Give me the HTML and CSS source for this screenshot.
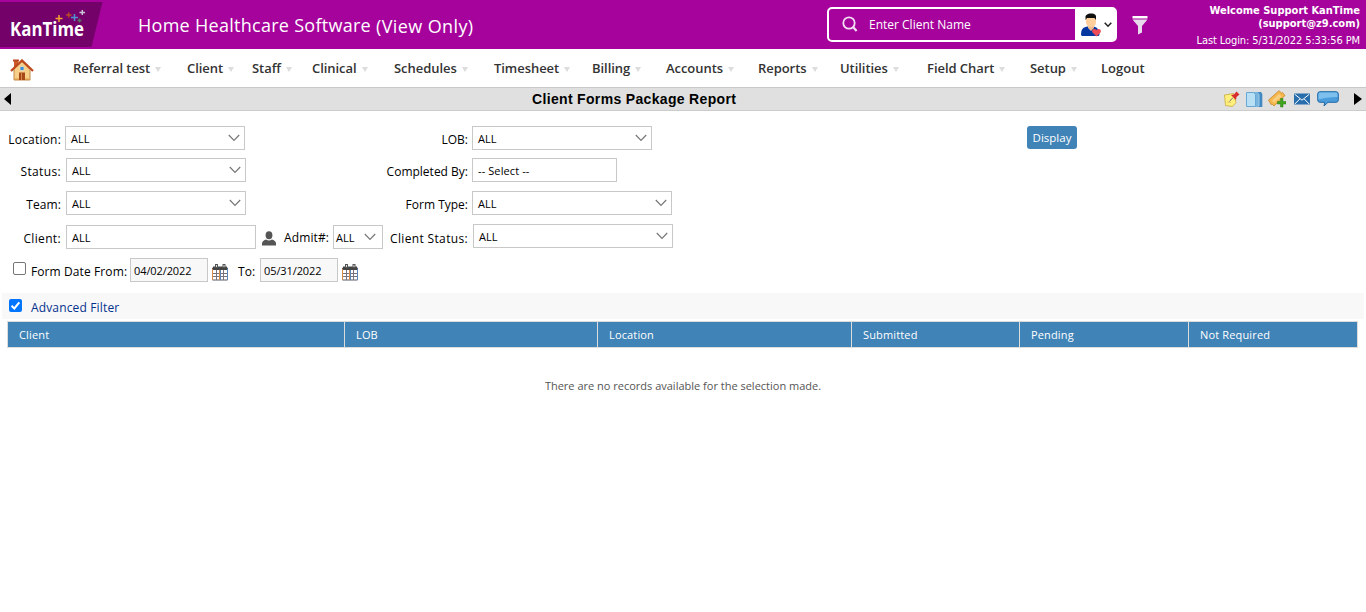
FILE: index.html
```html
<!DOCTYPE html>
<html lang="en">
<head>
<meta charset="utf-8">
<title>Client Forms Package Report</title>
<link rel="stylesheet" href="styles.css">
</head>
<body>
<svg class="defs" width="0" height="0">
  <symbol id="chev" viewBox="0 0 12 8"><path d="M.8 1l5.2 5.4L11.2 1" fill="none" stroke="#777" stroke-width="1.2"/></symbol>
  <symbol id="cal" viewBox="0 0 16 17">
    <path d="M.5 4h15v12H.5z" fill="#fff" stroke="#555b66"/>
    <path d="M1 2.500h14V6H1z" fill="#444"/>
    <path d="M3 0h3v4H3zM10.500 0h3v4h-3z" fill="#555"/><path d="M4 1h1v2H4zM11.500 1h1v2h-1z" fill="#ddd"/>
    <path d="M4.500 6v10M11.500 6v10M1 9.500h14M1 12.500h14" stroke="#77727c" fill="none"/>
    <path d="M.5 5v11M7.500 6v10" stroke="#d98a45"/><path d="M15.500 5v11M8.500 6v10" stroke="#5b87b8"/>
  </symbol>
</svg>
<header class="top">
  <svg class="logo" width="103" height="49" viewBox="0 0 103 49">
    <path d="M0 2h102.500L91.500 47H0z" fill="#740069"/>
    <text class="logo-text" x="10" y="36" textLength="74" lengthAdjust="spacingAndGlyphs">KanTime</text>
    <g fill="none" stroke-width="1.500">
      <path d="M55.500 18.500h7M59 15v7" stroke="#f2a234"/><path d="M66 15h5.500M68.700 12.500v5" stroke="#b84a28"/>
      <path d="M71 17.500h7M74.500 14v7" stroke="#5390d0"/><path d="M79.500 12.500h5.500M82.300 10v5" stroke="#c9c5d6"/>
      <path d="M77.500 20.500h4M79.500 18.500v4" stroke="#55775e"/>
    </g>
  </svg>
  <h1 class="product">Home Healthcare Software <span class="mode">(View Only)</span></h1>
  <div class="search">
    <svg class="glass" width="16" height="17" viewBox="0 0 16 17"><circle cx="7" cy="7" r="5.700" fill="none" stroke="#f3dff3" stroke-width="1.800"/><path d="M11 11l3.600 4" stroke="#f3dff3" stroke-width="2.200"/></svg>
    <span class="search-hint">Enter Client Name</span>
    <div class="who">
      <svg width="20" height="24" viewBox="0 0 20 24">
        <path d="M0 22c0-6 2-8 7-8.500h5c4 .5 6 2.500 6.500 8.500l-1 1H1z" fill="#0437a0"/>
        <path d="M7 12h6v3l-3 3-3-3z" fill="#efb98d"/><path d="M5 4h10v5c0 3-2 5-5 5s-5-2-5-5z" fill="#ffcf9c"/>
        <path d="M4.500 7V3C6 1 8 .5 10 .5S14.500 1 15 3v4l-1.500-2H6z" fill="#101010"/>
        <path d="M15.500 23.500L11.500 19.500c-1.500-3 2-4.500 4-2.500 2-2 5.500-.5 4 2.500z" fill="#ed4b55"/>
      </svg>
      <svg width="8" height="6" viewBox="0 0 8 6"><path d="M.7.8L4 4.200 7.300.8" fill="none" stroke="#222" stroke-width="1.500"/></svg>
    </div>
  </div>
  <svg class="funnel" width="16" height="19" viewBox="0 0 16 19"><path d="M.5 0h15v2.500H.5z" fill="#fff"/><path d="M.5 3.500h15L10 10v6.500L6 18.500V10z" fill="#e8dcec"/></svg>
  <div class="user"><b>Welcome Support KanTime</b><b>(support@z9.com)</b><span class="login">Last Login: 5/31/2022 5:33:56 PM</span></div>
</header>
<nav class="menu">
  <a class="home"><svg width="24" height="22" viewBox="0 0 24 22">
    <path d="M4 1h4v7H4z" fill="#cf5b2c"/><path d="M3 .5h6v2H3z" fill="#b84720"/>
    <path d="M4 10l8-7.500 8 8V21H4z" fill="#f8cf88" stroke="#c18a4a"/><path d="M5 19.500h14V21H5z" fill="#dd9c49"/>
    <path d="M1 12L12 1.500 23 12" fill="none" stroke="#bd491d" stroke-width="2.300"/>
    <path d="M9 13.500h6V21H9z" fill="#a64817"/><path d="M11.500 14v7" stroke="#d88949"/><path d="M10 7.500h4v4h-4z" fill="#398fdc" stroke="#eddcb4" stroke-width=".8"/>
  </svg></a>
  <a class="arrow w1">Referral test</a><a class="arrow w2">Client</a><a class="arrow w3">Staff</a><a class="arrow w4">Clinical</a><a class="arrow w5">Schedules</a><a class="arrow w6">Timesheet</a><a class="arrow w7">Billing</a><a class="arrow w8">Accounts</a><a class="arrow w9">Reports</a><a class="arrow w10">Utilities</a><a class="arrow w11">Field Chart</a><a class="arrow w12">Setup</a><a class="w13">Logout</a>
</nav>
<div class="titlebar">
  <svg width="7" height="12" viewBox="0 0 7 12"><path d="M7 0v12L0 6z" fill="#000"/></svg>
  <h2 class="title">Client Forms Package Report</h2>
  <div class="tools">
    <svg class="note" width="16" height="16" viewBox="0 0 16 16"><path d="M.5 4l9-1.500 2.500 9-3.500 4-7-1z" fill="#fff07d" stroke="#c9a93c" stroke-width=".8"/><path d="M3 11l4 .5" stroke="#d8b956" stroke-width=".7"/><path d="M5.500 10.500L9 6.500" stroke="#777"/><path d="M7 4l3-.5L12.500.5 15.500 3.500l-3 2.500-.5 3z" fill="#d92b2b"/></svg>
    <svg class="book" width="17" height="17" viewBox="0 0 17 17"><path d="M6 1h9l1.300 2v13H6z" fill="#3f88c2"/><path d="M7 1h5l1 1.500V16H7z" fill="#78b4dd"/><path d="M.5 1.500h7l2 2v12H.5z" fill="#b9dff5" stroke="#68a8d4"/><path d="M13 3v12" stroke="#9dcbe8"/></svg>
    <svg class="tag" width="18" height="18" viewBox="0 0 18 18"><path d="M.5 10L11 .7 13.500 3l1-.5L17 5.500 6 16l-2-2-1 .5z" fill="#f5b64c" stroke="#c68a29" stroke-width=".8"/><path d="M4 10.500l7-6.500 2.500 2.500L6 13z" fill="#f9cf7f"/><path d="M9.500 11.500h3v-3h2.500v3h3V14h-3v3h-2.500v-3h-3z" fill="#40a51d" stroke="#267815" stroke-width=".5"/></svg>
    <svg class="mail" width="16" height="12" viewBox="0 0 16 12"><path d="M0 .5h16v11H0z" fill="#286dac"/><path d="M.7 1.200L8 7.200l7.300-6M.8 11L6 5.800M15.200 11L10 5.800" fill="none" stroke="#fff" stroke-width="1"/></svg>
    <svg width="22" height="16" viewBox="0 0 22 16"><path d="M3 .7h16q2.300 0 2.300 2.300v6q0 2.300-2.300 2.300h-8L7 15l.7-3.700H3Q.7 11.300.7 9V3Q.7.7 3 .7z" fill="#4a9cdb" stroke="#2269a6"/><path d="M2.500 1.500h17l1 1.500v3Q9 6 1.500 8.500V3z" fill="#7dc0ee"/></svg>
  </div>
  <svg width="8" height="12" viewBox="0 0 8 12"><path d="M0 0l8 6-8 6z" fill="#000"/></svg>
</div>
<main class="filters">
  <div class="row">
    <label class="lab first">Location:</label><div class="box sel wide up">ALL<svg width="12" height="8"><use href="#chev"/></svg></div>
    <div class="second s1"><label class="lab">LOB:</label><div class="box sel wide">ALL<svg width="12" height="8"><use href="#chev"/></svg></div></div>
    <button class="display">Display</button>
  </div>
  <div class="row r2">
    <label class="lab first roomy">Status:</label><div class="box sel wide">ALL<svg width="12" height="8"><use href="#chev"/></svg></div>
    <div class="second"><label class="lab">Completed By:</label><div class="box pick">-- Select --</div></div>
  </div>
  <div class="row r3">
    <label class="lab first">Team:</label><div class="box sel wide">ALL<svg width="12" height="8"><use href="#chev"/></svg></div>
    <div class="second"><label class="lab">Form Type:</label><div class="box sel wider">ALL<svg width="12" height="8"><use href="#chev"/></svg></div></div>
  </div>
  <div class="row r4">
    <label class="lab first roomy">Client:</label><div class="box client">ALL</div>
    <svg class="person" width="14" height="15" viewBox="0 0 14 15"><ellipse cx="7" cy="4.200" rx="3.400" ry="4" fill="#555"/><path d="M0 14.500v-2Q0 10 4 8.500q3 2 6 0 4 1.500 4 4v2z" fill="#555"/></svg>
    <label class="lab admit">Admit#:</label><div class="box sel tiny">ALL<svg width="12" height="8"><use href="#chev"/></svg></div>
    <div class="status"><label class="lab roomy">Client Status:</label><div class="box sel wider">ALL<svg width="12" height="8"><use href="#chev"/></svg></div></div>
  </div>
  <div class="row r5">
    <span class="check"></span><label class="lab from">Form Date From:</label><div class="box date">04/02/2022</div><svg class="cal" width="16" height="17"><use href="#cal"/></svg>
    <label class="lab to">To:</label><div class="box date">05/31/2022</div><svg class="cal" width="16" height="17"><use href="#cal"/></svg>
  </div>
</main>
<div class="advanced"><svg width="13" height="13" viewBox="0 0 13 13"><rect width="13" height="13" rx="2" fill="#0075ff"/><path d="M2.500 6.800l2.800 2.700 5-6.200" fill="none" stroke="#fff" stroke-width="2"/></svg><span>Advanced Filter</span></div>
<table class="grid">
  <colgroup><col class="c1"><col class="c2"><col class="c3"><col class="c4"><col class="c5"><col class="c6"></colgroup>
  <thead><tr><th>Client</th><th>LOB</th><th>Location</th><th>Submitted</th><th>Pending</th><th>Not Required</th></tr></thead>
</table>
<p class="empty">There are no records available for the selection made.</p>
</body>
</html>
```
FILE: styles.css
```css
* { box-sizing: border-box; }
body { margin: 0; background: #fff; color: #000; font-family: "Open Sans", "Noto Sans", sans-serif; font-size: 12px; overflow: hidden; }
h1, h2, p { margin: 0; font-weight: normal; }
svg { display: block; flex: none; }
.defs { position: absolute; }

.top { display: flex; height: 49px; background: #a5039c; color: #fff; }
.logo-text { font: 700 20px/1 "Open Sans", sans-serif; fill: #fff; }
.product { flex: none; width: 724px; padding: 12px 0 0 35px; font-size: 18px; line-height: 26px; white-space: nowrap; font-weight: 500; letter-spacing: .28px; }
.mode { position: relative; top: 1px; letter-spacing: .4px; }
.search { display: flex; flex: none; align-items: center; width: 290px; height: 35px; margin-top: 7px; border: 2px solid #fff; border-radius: 5px; }
.glass { margin: 0 11px 0 13px; }
.search-hint { flex: 1; font-size: 12px; }
.who { display: flex; align-items: center; gap: 3px; width: 40px; height: 31px; padding-left: 6px; background: #fff; }
.funnel { margin: 16px 0 0 15px; }
.user { flex: 1; padding: 4px 6px 0 0; text-align: right; font-family: "DejaVu Sans Condensed", "DejaVu Sans", sans-serif; font-size: 11px; line-height: 13px; white-space: nowrap; }
.user b { display: block; }
.login { display: block; margin-top: 4px; letter-spacing: -.1px; }

.menu { display: flex; height: 38px; color: #333; font-size: 13px; font-weight: 600; line-height: 38px; white-space: nowrap; }
.menu a { flex: none; }
.home { width: 73px; padding: 10px 0 0 10px; }
.arrow { display: flex; align-items: center; gap: 5px; letter-spacing: -.05px; }
.arrow::after { content: ""; margin-top: 2px; border: 3px solid transparent; border-top: 5px solid #ddd; border-bottom: 0; }
.w1 { width: 114px; } .w2 { width: 65px; } .w3 { width: 60px; } .w4 { width: 82px; }
.w5 { width: 100px; } .w6 { width: 98px; } .w7 { width: 74px; } .w8 { width: 92px; }
.w9 { width: 82px; } .w10 { width: 87px; } .w11 { width: 103px; } .w12 { width: 71px; }

.titlebar { display: flex; align-items: center; height: 24px; padding: 0 4px; border-top: 1px solid #c9c9c9; border-bottom: 1px solid #ccc; background: #e0e0e0; }
.title { flex: 1; padding-left: 521px; font: bold 14px/22px "Liberation Sans", Arial, sans-serif; letter-spacing: .33px; white-space: nowrap; }
.tools { display: flex; align-items: center; margin-right: 15px; }
.note { margin-right: 6px; }
.book { margin-right: 5px; }
.tag { margin-right: 8px; }
.mail { margin-right: 7px; }

.filters { padding-top: 15px; height: 182px; }
.row { display: flex; height: 24px; align-items: flex-start; }
.r2 { margin-top: 8px; } .r3 { margin-top: 9px; } .r4 { margin-top: 10px; } .r5 { margin-top: 9px; }
.lab { flex: none; line-height: 17px; padding-top: 5px; text-align: right; white-space: nowrap; letter-spacing: .1px; }
.roomy { letter-spacing: .35px; }
.first { width: 61px; margin-right: 5px; }
.first:has(+ .up) { margin-right: 4px; letter-spacing: .2px; }
.box { display: flex; align-items: center; flex: none; height: 24px; padding: 1px 4px 0 4px; border: 1px solid #c8c8c8; background: #fff; font-size: 11px; white-space: nowrap; }
.sel { justify-content: space-between; }
.sel svg { margin-bottom: 2px; }
.wide { width: 180px; padding-left: 5px; }
.wider { width: 200px; padding-left: 5px; }
.pick { width: 145px; padding-left: 5px; letter-spacing: .1px; }
.client { width: 190px; padding-left: 5px; }
.tiny { width: 50px; padding-left: 2px; padding-right: 6px; }
.second { display: flex; flex: none; gap: 4px; width: 427px; }
.second .lab { width: 222px; letter-spacing: 0; }
.s1 { width: 428px; }
.s1 .lab { width: 223px; }
.display { width: 50px; height: 23px; margin-left: 354px; padding: 0; border: 0; border-radius: 3px; background: #3f83b7; color: #fff; font: 11.5px/24px "Open Sans", sans-serif; }
.person { margin: 6px 6px 0 6px; }
.r4 .admit { width: 47px; margin-right: 4px; padding-top: 4px; }
.status { display: flex; gap: 5px; margin: -1px 0 0 7px; }
.status .lab { width: 78px; padding-top: 6px; }
.check { width: 13px; height: 13px; margin: 4px 5px 0 13px; border: 1px solid #767676; border-radius: 2px; }
.from { width: 96px; margin-right: 3px; }
.date { width: 78px; background: #f8f8f8; padding-left: 3px; letter-spacing: -.1px; }
.cal { margin: 6px 2px 0 4px; }
.to { width: 16px; margin: 0 6px 0 8px; }

.advanced { display: flex; align-items: flex-start; gap: 9px; height: 26px; margin: 0 2px; padding: 6px 0 0 7px; background: #f8f8f8; color: #03318e; }
.advanced span { line-height: 17px; letter-spacing: .15px; }
.grid { width: 1351px; margin: 2px 0 0 7px; table-layout: fixed; border-collapse: collapse; }
.grid th { height: 26px; padding: 0 0 1px 11px; border: 1px solid #dcdcdc; background: #3f83b7; color: #fff; text-align: left; font-size: 11px; font-weight: normal; letter-spacing: .15px; }
.c1 { width: 337px; } .c2 { width: 253px; } .c3 { width: 254px; } .c4 { width: 168px; } .c5 { width: 169px; } .c6 { width: 169px; }
.empty { margin-top: 30px; color: #555; font-size: 11px; line-height: 15px; text-align: center; }
```
